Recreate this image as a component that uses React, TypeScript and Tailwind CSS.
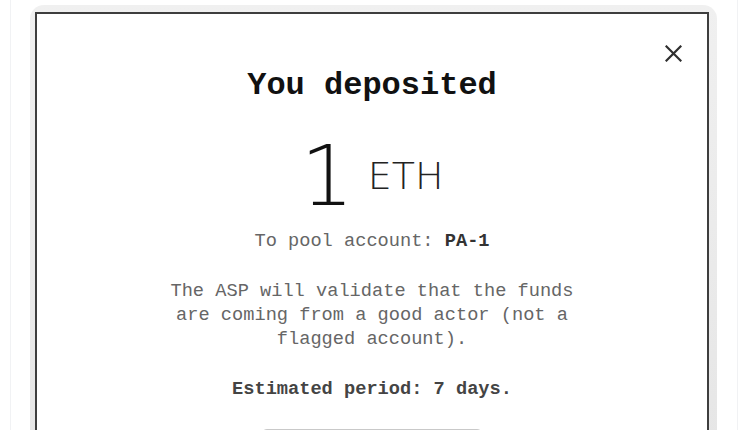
const mono = "font-['Liberation_Mono','DejaVu_Sans_Mono',monospace]";

function CloseIcon() {
    return (
        <svg width="17" height="17" viewBox="0 0 17 17" fill="none">
            <path d="M1.5 1.5 L15.5 15.5 M15.5 1.5 L1.5 15.5" stroke="#2f2f2f" strokeWidth="2.2" strokeLinecap="square" />
        </svg>
    );
}

export default function App() {
    return (
        <div className="h-[430px] bg-white overflow-hidden">
            <div className="ml-[10px] w-[728px] h-[430px] border-x border-[#f1f2f4] pt-[5px] pl-[19px] pr-[20px]">
                <div className="rounded-t-[14px] bg-gradient-to-b from-[#f0f0f0] to-[#e6e6e6] pl-[5px] pr-[8px] pt-[7px] h-[440px]">
                    <div className={`relative h-[440px] border-2 border-[#3e3e3e] bg-white flex flex-col items-center pt-[52px] ${mono}`}>
                        <button className="absolute top-[31px] right-[25px]">
                            <CloseIcon />
                        </button>

                        <h2 className="text-[32px] leading-[40px] font-bold text-[#111]">You deposited</h2>

                        <div className="mt-[29px] flex items-center gap-[14px] font-['DejaVu_Sans',sans-serif] font-extralight text-[#111]">
                            <span className="text-[84px] leading-[82px]">1</span>
                            <span className="text-[38px] leading-none text-[#222]">ETH</span>
                        </div>

                        <p className="mt-[12px] text-[18.67px] leading-[24px] text-[#666]">
                            To pool account: <span className="font-bold text-[#333]">PA-1</span>
                        </p>

                        <p className="mt-[26px] max-w-[420px] text-center text-[18.67px] leading-[24px] text-[#666]">
                            The ASP will validate that the funds are coming from a good actor (not a flagged account).
                        </p>

                        <p className="mt-[26px] text-[18.67px] leading-[24px] font-bold text-[#444]">
                            Estimated period: 7 days.
                        </p>

                        <button className="mt-[28px] w-[222px] h-[40px] rounded-md border border-[#c9c9c9] bg-white" />
                    </div>
                </div>
            </div>
        </div>
    );
}
